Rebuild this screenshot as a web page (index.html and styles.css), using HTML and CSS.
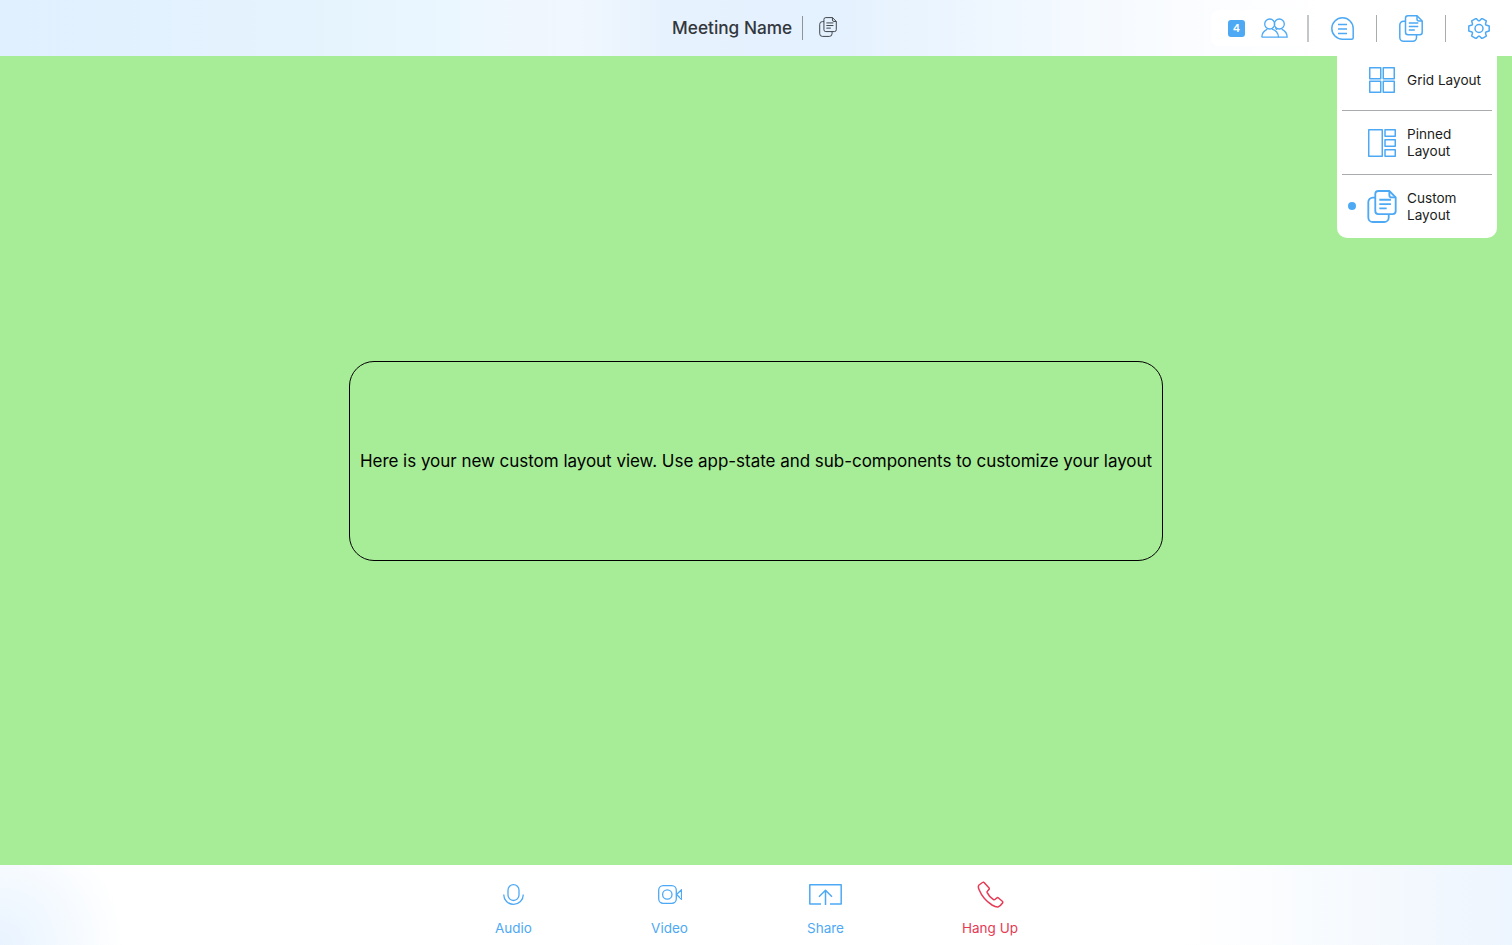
FILE: index.html
```html
<!doctype html>
<html lang="en">
<head>
    <meta charset="utf-8">
    <meta name="viewport" content="width=device-width, initial-scale=1">
    <title>Meeting Name</title>
    <link rel="stylesheet" href="styles.css">
</head>
<body>
    <svg class="defs" width="0" height="0" aria-hidden="true">
        <symbol id="copy" viewBox="0 0 24 27">
            <path d="M9 .8h9l5.200 5.200v11.200a2.500 2.500 0 0 1-2.500 2.500H9a2.500 2.500 0 0 1-2.500-2.500V3.300A2.500 2.500 0 0 1 9 .8z"/>
            <path d="M18 .8v3.200a2 2 0 0 0 2 2h3.200"/>
            <path d="M9.800 8h9.500M9.800 11.500h9.500M9.800 15h6"/>
            <path d="M6.500 6.200H4.500A3.700 3.700 0 0 0 .8 9.900v12.600a3.700 3.700 0 0 0 3.700 3.700h9.300a3.700 3.700 0 0 0 3.700-3.700v-2.800"/>
        </symbol>
    </svg>

    <header class="topbar">
        <div class="meeting">
            <span class="meeting-name">Meeting Name</span>
            <button class="copy-btn"><svg class="icon dark" width="18" height="20"><use href="#copy"/></svg></button>
        </div>
        <div class="top-actions">
            <div class="people">
                <span class="count">4</span>
                <svg class="icon" width="27" height="20" viewBox="0 0 27 20">
                    <circle cx="8.700" cy="6" r="5"/>
                    <circle cx="18.300" cy="6" r="5"/>
                    <path d="M.8 19.200c0-3.500 2.500-6.500 5.500-8M11 11.200c3.500 1 6.200 4 6.500 8H.8"/>
                    <path d="M17.500 19.200h8.700c0-3.500-2.500-6.500-5.500-8M14.500 10l1.500 1.800"/>
                </svg>
                <span class="sep"></span>
            </div>
            <div class="top-btn">
                <svg class="icon thick" width="23" height="23" viewBox="0 0 23 23">
                    <path d="M11.500 .8a10.700 10.700 0 1 0 0 21.400h9.200a1.500 1.500 0 0 0 1.500-1.500V11.500A10.700 10.700 0 0 0 11.500 .8z"/>
                    <path d="M7 7.500h9M7 12h9M7 16.500h9"/>
                </svg>
            </div>
            <div class="top-btn wide"><svg class="icon thick" width="24" height="27"><use href="#copy"/></svg></div>
            <div class="top-btn last">
                <svg class="icon thick" width="22" height="21" viewBox="0 0 22 21">
                    <circle cx="11" cy="10.500" r="4"/>
                    <path d="M18.010 7.080L21.190 7.960V13.040L18.010 13.920L17.470 14.860L18.290 18.050L13.890 20.590L11.540 18.280H10.460L8.110 20.590L3.710 18.050L4.530 14.860L3.990 13.920L.81 13.040V7.960L3.990 7.080L4.530 6.140L3.710 2.950L8.110 .41L10.460 2.720H11.540L13.890 .41L18.290 2.950L17.470 6.140z"/>
                </svg>
            </div>
        </div>
    </header>

    <main class="stage">
        <div class="custom-box">Here is your new custom layout view. Use app-state and sub-components to customize your layout</div>

        <ul class="layout-menu">
            <li class="layout-item">
                <span class="layout-icon">
                    <svg class="icon thick" width="26" height="26" viewBox="0 0 26 26">
                        <rect x=".75" y=".75" width="11" height="11"/>
                        <rect x="14.250" y=".75" width="11" height="11"/>
                        <rect x=".75" y="14.250" width="11" height="11"/>
                        <rect x="14.250" y="14.250" width="11" height="11"/>
                    </svg>
                </span>
                <span>Grid Layout</span>
            </li>
            <li class="layout-item">
                <span class="layout-icon">
                    <svg class="icon thick" width="28" height="28" viewBox="0 0 28 28">
                        <rect x=".75" y=".75" width="13.500" height="26.500"/>
                        <rect x="17" y=".75" width="10.250" height="6.500"/>
                        <rect x="17" y="10.750" width="10.250" height="6.500"/>
                        <rect x="17" y="20.750" width="10.250" height="6.500"/>
                    </svg>
                </span>
                <span>Pinned<br>Layout</span>
            </li>
            <li class="layout-item active">
                <span class="layout-icon"><svg class="icon thick" width="30" height="33"><use href="#copy"/></svg></span>
                <span>Custom<br>Layout</span>
            </li>
        </ul>
    </main>

    <footer class="toolbar">
        <button class="tool">
            <span class="tool-icon">
                <svg class="icon" width="21" height="21" viewBox="0 0 21 21">
                    <rect x="5" y=".7" width="11" height="15.800" rx="5.500"/>
                    <path d="M.7 10.500a9.800 9.800 0 0 0 19.600 0"/>
                </svg>
            </span>
            <span>Audio</span>
        </button>
        <button class="tool">
            <span class="tool-icon">
                <svg class="icon" width="24" height="19" viewBox="0 0 24 19">
                    <rect x=".7" y=".7" width="17.600" height="17.600" rx="4.500"/>
                    <circle cx="9.300" cy="9.500" r="4.700"/>
                    <path d="M18.500 9.500l5-4.800v9.600z"/>
                </svg>
            </span>
            <span>Video</span>
        </button>
        <button class="tool">
            <span class="tool-icon">
                <svg class="icon thick" width="33" height="21" viewBox="0 0 33 21">
                    <path d="M12 20H.8V.8h31.400V20H21"/>
                    <path d="M16.500 21V6.500M10 12.800l6.500-6.500 6.500 6.500"/>
                </svg>
            </span>
            <span>Share</span>
        </button>
        <button class="tool hangup">
            <span class="tool-icon">
                <svg class="icon thick" width="27" height="27" viewBox="0 0 27 27">
                    <path d="M5.500 1.500l-3.500 2.500c-1 1-.8 2.500 0 4.500 2.500 6 7.500 12 13 15.500 2 1.200 4 2.200 6 2 1.500-.3 3-1.800 4.500-4 .5-.7.300-1.300-.2-1.800l-3.800-3.200c-.6-.5-1.200-.5-1.800 0l-1.700 1.500c-.5.400-1 .4-1.500.1-2.500-1.600-5-4.300-6.300-7-.2-.5-.2-1 .2-1.400l1.500-1.600c.4-.5.500-1 .2-1.600L7.500 2c-.4-.8-1.300-1-2-.5z"/>
                </svg>
            </span>
            <span>Hang Up</span>
        </button>
    </footer>
</body>
</html>
```
FILE: styles.css
```css
* {
    box-sizing: border-box;
}
html, body {
    height: 100%;
}
body {
    margin: 0;
    display: flex;
    flex-direction: column;
    font-family: Inter, "Liberation Sans", sans-serif;
    overflow: hidden;
}
button {
    font: inherit;
    background: none;
    border: none;
    padding: 0;
}
.defs {
    position: absolute;
}
.icon {
    display: block;
    fill: none;
    stroke: #4ea9f5;
    stroke-width: 1.300;
    stroke-linejoin: round;
}
.icon.thick {
    stroke-width: 1.500;
}
.icon.dark {
    stroke: #3a3f45;
}

.topbar {
    flex: 0 0 56px;
    position: relative;
    display: flex;
    justify-content: flex-end;
    align-items: center;
    background: linear-gradient(90deg, #e0f0ff 0%, #e4f3fd 20%, #ebf7ff 30%, #f0f6fe 35%, #f1f7fe 38%, #e6f2fe 44%, #e4f1fe 55%, #eff7ff 66%, #fafcff 78%, #ffffff 88%);
}
.meeting {
    position: absolute;
    left: 672px;
    top: 16px;
    display: flex;
    align-items: center;
}
.meeting-name {
    font-size: 17.250px;
    font-weight: 500;
    color: #33373c;
    line-height: 24px;
    padding-right: 10px;
    border-right: 1px solid #8e9499;
}
.copy-btn {
    margin: -3px 0 0 16px;
}
.top-actions {
    display: flex;
    align-items: center;
}
.people {
    display: flex;
    align-items: center;
    gap: 16px;
    height: 36px;
    padding-left: 17px;
    background: #fff;
    border-radius: 8px 0 0 8px;
}
.sep {
    width: 2px;
    height: 27px;
    margin-left: 3px;
    background: #c4c7ca;
}
.count {
    width: 17px;
    height: 17px;
    border-radius: 3px;
    background: #4ea9f5;
    color: #fff;
    font-size: 11px;
    font-weight: 600;
    line-height: 17px;
    text-align: center;
}
.top-btn {
    display: flex;
    justify-content: center;
    align-items: center;
    width: 68px;
    height: 27px;
    border-right: 1px solid #a9abad;
}
.top-btn.wide {
    width: 69px;
}
.top-btn.last {
    width: 66px;
    border-right: none;
}

.stage {
    flex: 1;
    position: relative;
    display: flex;
    justify-content: center;
    align-items: center;
    background: #a7ed97;
}
.custom-box {
    width: 814px;
    height: 200px;
    display: flex;
    align-items: center;
    justify-content: center;
    border: 1px solid #000;
    border-radius: 25px;
    font-size: 17px;
    letter-spacing: -0.03px;
    color: #000;
    white-space: nowrap;
}
.layout-menu {
    position: absolute;
    top: 0;
    right: 15px;
    width: 160px;
    height: 182px;
    margin: 0;
    padding: 0 5px;
    list-style: none;
    background: #fff;
    border-radius: 0 0 10px 10px;
}
.layout-item {
    position: relative;
    display: flex;
    align-items: center;
    gap: 10px;
    height: 64px;
    padding-left: 25px;
    font-size: 13.600px;
    line-height: 17px;
    color: #1b1d20;
    border-bottom: 1px solid #a9abad;
}
.layout-item:first-child {
    height: 55px;
    padding-bottom: 6px;
}
.layout-item:last-child {
    height: 63px;
    border-bottom: none;
}
.layout-icon {
    display: flex;
    justify-content: center;
    width: 30px;
}
.layout-item.active::before {
    content: "";
    position: absolute;
    left: 6px;
    top: 27px;
    width: 8px;
    height: 8px;
    border-radius: 50%;
    background: #4ea9f5;
}

.toolbar {
    flex: 0 0 80px;
    display: flex;
    justify-content: center;
    background: radial-gradient(circle at 0 100%, #e8f3ff 0, #ffffff 125px) left / 130px 100% no-repeat, linear-gradient(90deg, #ffffff 78%, #f6fafe 90%, #edf5fe 100%);
}
.tool {
    width: 156px;
    display: flex;
    flex-direction: column;
    align-items: center;
    justify-content: flex-start;
    gap: 12px;
    padding-top: 15px;
    font-size: 13.500px;
    line-height: 17px;
    color: #4ea9f5;
}
.tool-icon {
    display: flex;
    align-items: center;
    justify-content: center;
    height: 28px;
}
.tool.hangup {
    width: 173px;
    color: #e63a54;
}
.tool.hangup .icon {
    stroke: #e63a54;
}
```
